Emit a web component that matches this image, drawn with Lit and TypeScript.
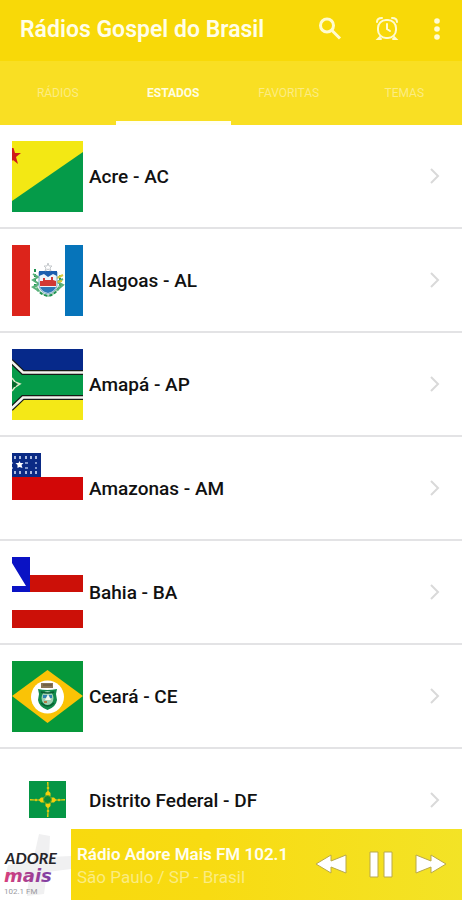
import { LitElement, html, svg, css } from "lit";
import type { SVGTemplateResult } from "lit";
import { customElement, property, state } from "lit/decorators.js";
import { classMap } from "lit/directives/class-map.js";

const dots = [3, 8, 14, 19, 24];

const flags: Record<string, SVGTemplateResult> = {
  AC: svg`
    <path fill="#f3e814" d="M0 0h71v71H0z"/>
    <path fill="#059b49" d="M71 11v60H0V60z"/>
    <path fill="#cf1a1c" d="M0 7l1.500 0 1.500 5h6l-5 4 2 7-5-4-1 1z"/>`,
  AL: svg`
    <path fill="#fff" d="M0 0h71v71H0z"/>
    <path fill="#dc241b" d="M0 0h18v71H0z"/>
    <path fill="#0674ba" d="M53 0h18v71H53z"/>
    <path fill="none" stroke="#9fcfb0" stroke-width="2" d="M24 40q3 9 12 11 8-2 12-11"/>
    <path fill="none" stroke="#1d9250" stroke-width="2" stroke-dasharray="3 2" d="M23 24v16q3 9 13 11 9-2 12-11V30"/>
    <path fill="none" stroke="#58b17a" stroke-width="2" d="M21 29l5 3-5 3 6 4-6 3 6 4M51 34l-6 3 6 3-6 5"/>
    <path fill="none" stroke="#d8c93c" stroke-width="2" d="M45 33l6-3M45 37l5-1"/>
    <path fill="#eef5fa" stroke="#7fa9c4" d="M27 27h18v14q-2 7-9 8-7-1-9-8z"/>
    <path fill="#1d5fae" d="M27 26h18v5l-4-2-5 3-4-3-5 2z"/>
    <path fill="#d23a35" d="M28 38v-2h3v-3h2v2h6v-3h2v3l3 1v5H28z"/>
    <path fill="#2e79b8" d="M28 42h16q-2 5-8 6-6-1-8-6z"/>
    <path fill="none" stroke="#c5c9cc" d="M36 18l1 3h3l-2 2 1 3-3-2-3 2 1-3-2-2h3z"/>`,
  AP: svg`
    <path fill="#06298a" d="M0 0h71v24H0z"/>
    <path fill="#f4e817" d="M0 48h71v23H0z"/>
    <path fill="#059b49" d="M0 15l12 10h59v22H12L0 59z"/>
    <path fill="none" stroke="#151a16" stroke-width="5" d="M-1 12l12 11.500h60M-1 60l12-11.500h60"/>
    <path fill="none" stroke="#f4f4ee" stroke-width="2.500" d="M-1 12l12 11.500h60M-1 60l12-11.500h60"/>
    <path fill="#087a35" stroke="#dfe9c9" stroke-width="1.500" d="M0 29l3 4 5 2-5 3-3 4"/>
    <circle cx="2" cy="35.500" r="2.500" fill="#05672b"/>`,
  AM: svg`
    <path fill="#fff" d="M0 0h71v48H0z"/>
    <path fill="#d20707" d="M0 24h71v23H0z"/>
    <path fill="#0a2a85" d="M0 0h29v24H0z"/>
    ${dots.map((x) => [4, 19].map((y) => svg`<rect x=${x - 1} y=${y - 1} width="2" height="3" fill="#a9b9e0"/>`))}
    ${[9, 14].map((y) => svg`<path fill="#7f95cb" d="M0 ${y}h1v2H0zM13 ${y}h3v2h-3zM23 ${y}h2v2h-2z"/>`)}
    <path fill="#fff" d="M7.500 8l1 2h3l-2 2 1 3-3-1-2 1v-3l-2-2h3z"/>`,
  BA: svg`
    <path fill="#fff" d="M0 0h71v71H0z"/>
    <path fill="#cc1008" d="M18 18h53v17H18zM0 53h71v18H0z"/>
    <path fill="#0a12c4" d="M0 0h18v35H0v-6h14L0 6z"/>`,
  CE: svg`
    <path fill="#06983a" d="M0 0h71v71H0z"/>
    <path fill="#fac306" d="M35.500 9L71 35 35.500 62 0 35z"/>
    <circle cx="35.500" cy="36" r="16.500" fill="#fff"/>
    <path fill="#8a7655" d="M29 22h12v5H29z"/>
    <path fill="none" stroke="#5a4d38" d="M31 24h9"/>
    <path fill="#118a4b" d="M26 28q9 2 19 0l-1 5 1 6q-1 7-9.500 10Q27 46 26 39l1-6z"/>
    <ellipse cx="35.500" cy="37" rx="6" ry="7" fill="#9ed0b4"/>
    <path fill="#2f82b0" d="M31 34h9v3h-9z"/>
    <path fill="#f4f7ee" d="M33 39l3-6 3 6z"/>
    <path fill="#b37a45" d="M32 40h3v2h-3z"/>
    <path fill="none" stroke="#0a5c31" stroke-width="1.500" d="M29 31q7 2 13 0M29 42q7 6 13 0"/>`,
  DF: svg`
    <path fill="#059645" d="M17 16h37v37H17z"/>
    <path fill="#f6cf0b" d="M35 17h1.500v5l1 1-1 1v2l2 2v3h-5v-3l2-2v-2l-1-1 1-1zM35 52h1.500v-5l1-1-1-1v-2l2-2v-3h-5v3l2 2v2l-1 1 1 1zM18 34v1.500h5l1 1 1-1h2l2 2h3v-5h-3l-2 2h-2l-1-1-1 1zM53 34v1.500h-5l-1 1-1-1h-2l-2 2h-3v-5h3l2 2h2l1-1 1 1z"/>
    <circle cx="35.500" cy="34.500" r="4" fill="#0b8a35" stroke="#5fa82a"/>`,
};

const states = [
  ["Acre", "AC"],
  ["Alagoas", "AL"],
  ["Amapá", "AP"],
  ["Amazonas", "AM"],
  ["Bahia", "BA"],
  ["Ceará", "CE"],
  ["Distrito Federal", "DF"],
];

@customElement("state-row")
class StateRow extends LitElement {
  @property() name = "";
  @property() code = "";

  static styles = css`
    :host {
      display: block;
    }
    .row {
      display: flex;
      align-items: center;
      gap: 6px;
      box-sizing: border-box;
      height: 104px;
      padding: 0 20px 0 12px;
      border-bottom: 2px solid #e3e3e5;
      color: #111;
      text-decoration: none;
    }
    .flag {
      flex: none;
      width: 71px;
      height: 71px;
    }
    .label {
      flex: 1;
      padding-top: 2px;
      font-size: 19px;
      font-weight: 500;
      line-height: 24px;
    }
    .chevron {
      flex: none;
      width: 14px;
      height: 18px;
      fill: none;
      stroke: #d9d9d9;
      stroke-width: 2;
    }
  `;

  render() {
    return html`
      <a class="row" href="#${this.code}">
        <svg class="flag" viewBox="0 0 71 71" aria-hidden="true">${flags[this.code]}</svg>
        <span class="label">${this.name} - ${this.code}</span>
        <svg class="chevron" viewBox="0 0 14 18" aria-hidden="true"><path d="M3 2l7 7-7 7"/></svg>
      </a>
    `;
  }
}

@customElement("player-bar")
class PlayerBar extends LitElement {
  static styles = css`
    :host {
      display: flex;
      flex: none;
      height: 71px;
      background: linear-gradient(90deg, #f8d90c 0%, #f8db12 45%, #f3e326 100%);
    }
    .cover {
      flex: none;
      width: 71px;
      height: 71px;
      background: #fff;
    }
    .adore {
      font: italic 700 16px Lato, sans-serif;
    }
    .mais {
      font: italic 700 18px "DejaVu Sans", sans-serif;
    }
    .freq {
      font: 400 8px Roboto, sans-serif;
    }
    .info {
      flex: 1;
      min-width: 0;
      display: flex;
      flex-direction: column;
      justify-content: center;
      padding-left: 6px;
      white-space: nowrap;
    }
    .title {
      font-size: 17px;
      font-weight: 600;
      line-height: 24px;
      color: #fffef0;
    }
    .place {
      font-size: 17px;
      line-height: 22px;
      color: #fbec80;
    }
    .controls {
      display: flex;
      align-items: center;
      gap: 16px;
      padding-right: 14px;
    }
    button {
      width: 34px;
      height: 34px;
      padding: 0;
      border: 0;
      background: none;
    }
    .icon {
      display: block;
      width: 34px;
      height: 34px;
      fill: #fff;
      stroke: #b9a94a;
      stroke-width: 1;
    }
  `;

  render() {
    return html`
      <svg class="cover" viewBox="0 0 71 71" role="img" aria-label="Adore Mais 102.1 FM">
        <defs>
          <linearGradient id="ink" x1="0" x2="1">
            <stop offset="0" stop-color="#d83f7c" />
            <stop offset="1" stop-color="#7a3fa6" />
          </linearGradient>
        </defs>
        <path fill="#f0f0f1" d="M39 5l11 2-1 21 22-1v13l-24 3-3 22-17 2 2-20-24 3 3-14 25-4z" />
        <text class="adore" x="5" y="35" fill="#26242a">ADORE</text>
        <text class="mais" x="4" y="53" fill="url(#ink)">mais</text>
        <text class="freq" x="4" y="65" fill="#9a999f">102.1 FM</text>
      </svg>
      <div class="info">
        <span class="title">Rádio Adore Mais FM 102.1</span>
        <span class="place">São Paulo / SP - Brasil</span>
      </div>
      <div class="controls">
        <button aria-label="Anterior">
          <svg class="icon" viewBox="0 0 34 34"><path d="M2 16l15-9v6l15-6v18l-15-6v6z" /></svg>
        </button>
        <button aria-label="Pausar">
          <svg class="icon" viewBox="0 0 34 34"><path d="M6 4h8v25H6zM20 4h8v25h-8z" /></svg>
        </button>
        <button aria-label="Próxima">
          <svg class="icon" viewBox="0 0 34 34"><path d="M32 16L17 7v6L2 7v18l15-6v6z" /></svg>
        </button>
      </div>
    `;
  }
}

@customElement("app-root")
class AppRoot extends LitElement {
  @state() private tab = "ESTADOS";

  static styles = css`
    :host {
      display: flex;
      flex-direction: column;
      height: 100vh;
      overflow: hidden;
      background: #fff;
      font-family: Roboto, "Liberation Sans", sans-serif;
    }
    .bar {
      flex: none;
      display: flex;
      align-items: center;
      box-sizing: border-box;
      height: 61px;
      padding: 0 16px 4px 20px;
      background: #f8d908;
    }
    h1 {
      flex: 1;
      margin: 0;
      padding-top: 2px;
      font-size: 23px;
      font-weight: 600;
      line-height: 32px;
      white-space: nowrap;
      color: #fffee8;
    }
    .actions {
      display: flex;
      gap: 25px;
    }
    button {
      padding: 0;
      border: 0;
      background: none;
      font: inherit;
    }
    .action {
      width: 32px;
      height: 32px;
    }
    .more {
      width: 18px;
    }
    .icon {
      display: block;
      width: 100%;
      height: 32px;
      fill: none;
      stroke: #fffbd0;
      stroke-width: 3;
    }
    .clock {
      stroke-width: 2;
      stroke-linecap: round;
    }
    .dots {
      fill: #fffcd8;
      stroke: none;
    }
    .tabs {
      flex: none;
      display: grid;
      grid-template-columns: repeat(4, 1fr);
      height: 64px;
      background: #f9df23;
    }
    .tab {
      border-top: 4px solid transparent;
      border-bottom: 4px solid transparent;
      font-size: 12px;
      font-weight: 400;
      color: #fcec82;
    }
    .on {
      border-bottom-color: #fffff4;
      font-weight: 700;
      color: #fffde0;
    }
    .list {
      flex: 1;
      min-height: 0;
      overflow-y: auto;
      scrollbar-width: none;
      margin: 0;
      padding: 0;
      list-style: none;
    }
  `;

  render() {
    return html`
      <header class="bar">
        <h1>Rádios Gospel do Brasil</h1>
        <div class="actions">
          <button class="action" aria-label="Buscar">
            <svg class="icon" viewBox="0 0 32 32"><circle cx="13" cy="12.500" r="6.500" /><path d="M17.500 17l8.500 8.500" /></svg>
          </button>
          <button class="action" aria-label="Despertador">
            <svg class="icon clock" viewBox="0 0 32 32">
              <rect x="7" y="7" width="18" height="18" rx="8" />
              <path d="M16 11v5l3 2M6 9q0-4 5-4M26 9q0-4-5-4M9 24l-2 2h3M23 24l2 2h-3" />
            </svg>
          </button>
          <button class="action more" aria-label="Mais opções">
            <svg class="icon dots" viewBox="0 0 18 32">
              <circle cx="9" cy="8" r="2.800" /><circle cx="9" cy="16" r="2.800" /><circle cx="9" cy="24" r="2.800" />
            </svg>
          </button>
        </div>
      </header>
      <nav class="tabs" role="tablist">
        ${["RÁDIOS", "ESTADOS", "FAVORITAS", "TEMAS"].map(
          (t) => html`<button
            role="tab"
            aria-selected=${t === this.tab}
            class=${classMap({ tab: true, on: t === this.tab })}
            @click=${() => (this.tab = t)}
          >${t}</button>`,
        )}
      </nav>
      <ul class="list">
        ${states.map(([name, code]) => html`<li><state-row .name=${name} .code=${code}></state-row></li>`)}
      </ul>
      <player-bar></player-bar>
    `;
  }
}
